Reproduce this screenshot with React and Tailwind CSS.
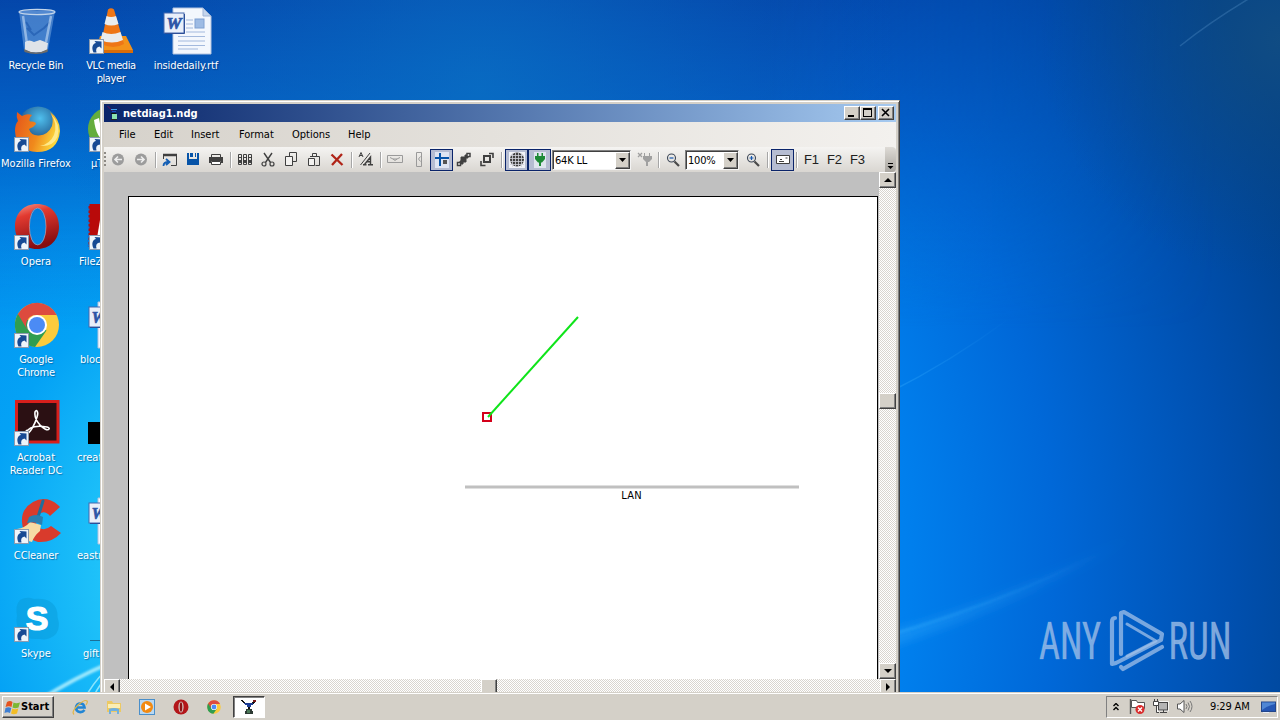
import React from 'react';

const uiFont = "font-['DejaVu_Sans_Condensed','DejaVu_Sans',sans-serif] [font-stretch:condensed]";
const raised = 'bg-[#d4d0c8] border border-t-white border-l-white border-r-[#404040] border-b-[#404040] shadow-[inset_-1px_-1px_0_#808080]';
const dither = 'bg-[#ebe8e4] bg-[conic-gradient(#d9d5cf_25%,#fff_0_50%,#d9d5cf_0_75%,#fff_0)] bg-[length:2px_2px]';

/* ---------- Wallpaper ---------- */

const Wallpaper = () => (
  <svg className="absolute inset-0" width="1280" height="720" viewBox="0 0 1280 720">
    <defs>
      <radialGradient id="sky" gradientUnits="userSpaceOnUse" cx="300" cy="570" r="1080">
        <stop offset="0" stopColor="#3fdcff" />
        <stop offset="0.17" stopColor="#22c6fa" />
        <stop offset="0.3" stopColor="#04a2f5" />
        <stop offset="0.56" stopColor="#0080ee" />
        <stop offset="0.7" stopColor="#0068d8" />
        <stop offset="0.86" stopColor="#0050b0" />
        <stop offset="1" stopColor="#003f88" />
      </radialGradient>
      <linearGradient id="topShade" x1="0" y1="0" x2="0" y2="1">
        <stop offset="0" stopColor="#0442a4" stopOpacity="0.92" />
        <stop offset="0.35" stopColor="#0450b4" stopOpacity="0.75" />
        <stop offset="1" stopColor="#0070d0" stopOpacity="0" />
      </linearGradient>
      <linearGradient id="shadeFade" x1="0" y1="0" x2="1" y2="0">
        <stop offset="0" stopColor="#fff" />
        <stop offset="0.6" stopColor="#fff" />
        <stop offset="0.95" stopColor="#000" />
      </linearGradient>
      <mask id="shadeMask"><rect width="1280" height="330" fill="url(#shadeFade)" /></mask>
      <radialGradient id="topGlow" gradientUnits="userSpaceOnUse" cx="480" cy="90" r="420">
        <stop offset="0" stopColor="#0a70c4" stopOpacity="0.75" />
        <stop offset="1" stopColor="#0a60c0" stopOpacity="0" />
      </radialGradient>
      <radialGradient id="corner" gradientUnits="userSpaceOnUse" cx="1280" cy="40" r="240">
        <stop offset="0" stopColor="#144f82" stopOpacity="0.8" />
        <stop offset="1" stopColor="#0a4888" stopOpacity="0" />
      </radialGradient>
      <linearGradient id="fade" x1="0" y1="0" x2="1" y2="0">
        <stop offset="0" stopColor="#3fb4ff" stopOpacity="0.32" />
        <stop offset="1" stopColor="#3fb4ff" stopOpacity="0" />
      </linearGradient>
      <filter id="soft"><feGaussianBlur stdDeviation="1.3" /></filter>
      <filter id="softer"><feGaussianBlur stdDeviation="4" /></filter>
    </defs>
    <rect width="1280" height="720" fill="url(#sky)" />
    <rect width="1280" height="330" fill="url(#topShade)" mask="url(#shadeMask)" />
    <rect width="1280" height="510" fill="url(#topGlow)" />
    <rect width="1280" height="320" fill="url(#corner)" />
    <path d="M880 634Q1000 602 1130 535L1130 541Q1010 610 880 650Z" fill="url(#fade)" filter="url(#softer)" />
    <path d="M880 638Q1000 604 1100 553" stroke="url(#fade)" strokeWidth="3" fill="none" filter="url(#soft)" />
    <path d="M890 392Q950 362 1010 318" stroke="url(#fade)" strokeWidth="1.500" fill="none" />
    <path d="M1180 46Q1210 22 1250 -2" stroke="#5f9ad0" strokeOpacity="0.3" strokeWidth="1.500" fill="none" />
    <path d="M40 700Q74 678 110 663" stroke="#c8f8ff" strokeWidth="4" strokeOpacity="0.75" fill="none" filter="url(#soft)" />
    <path d="M84 700Q92 684 106 670M92 700Q96 690 104 680" stroke="#a8f0ff" strokeWidth="1.600" strokeOpacity="0.8" fill="none" />
  </svg>
);

const Watermark = () => (
  <svg className="absolute left-[1030px] top-[600px] overflow-visible" width="220" height="80" viewBox="1030 600 220 80">
    <g fill="#a0c0e8" fillOpacity="0.78" stroke="#a0c0e8" strokeOpacity="0.5" strokeWidth="0.700" fontFamily="Roboto, sans-serif" fontSize="51.500">
      <text x="1039" y="659" textLength="62" lengthAdjust="spacingAndGlyphs">ANY</text>
      <text x="1168.500" y="659" textLength="63" lengthAdjust="spacingAndGlyphs">RUN</text>
    </g>
    <g fill="none" stroke="#a0c0e8" strokeOpacity="0.75" strokeWidth="4.200" strokeLinejoin="round" strokeLinecap="round">
      <path d="M1115 618Q1112 618 1112 622V664L1116 663L1161 640L1162 634L1124 612L1121 613V654" />
      <path d="M1127 624L1156 641L1127 656" strokeWidth="3" />
      <path d="M1121 667L1123 669L1162 647" />
    </g>
  </svg>
);

/* ---------- Desktop icons ---------- */

const Shortcut = ({ y = 31 }) => (
  <g>
    <rect x="2.500" y={y + 0.5} width="14" height="14" fill="#eef4fa" stroke="#8b9bb0" />
    <path transform={`translate(2 ${y})`} d="M4.500 13.500C2 8 4 4.500 7 4L5.500 2L12.500 2.500L12.500 9.500L10.500 7.500C7.500 8 6.500 10 7.500 13.500Z" fill="#174a94" />
  </g>
);

const IconBox = ({ children }) => (
  <svg className="overflow-visible shrink-0" width="48" height="48" viewBox="0 0 48 48">{children}</svg>
);

const RecycleBin = () => (
  <IconBox>
    <path d="M7 3L12 42Q24 48 36 42L43 3Z" fill="#7fb0e6" fillOpacity="0.5" />
    <path d="M13 34Q17 31 22 34L28 32L36 35L35 42Q24 47 13 42Z" fill="#dfe3e8" />
    <path d="M12 41Q24 48 36 41L35.500 44Q24 48 12.500 44Z" fill="#6d6b68" />
    <path d="M15 20L22 27L32 20L38 14M14 14L19 22" stroke="#1c56ac" strokeWidth="2" strokeOpacity="0.6" fill="none" />
    <path d="M11 8L15 36M39 8L34 34" stroke="#d4e6fa" strokeOpacity="0.55" strokeWidth="2.500" />
    <ellipse cx="25" cy="4" rx="18" ry="2.600" fill="#5f93d6" fillOpacity="0.6" stroke="#c3d5ea" strokeWidth="1.200" />
  </IconBox>
);

const Vlc = () => (
  <IconBox>
    <path d="M13 28H39L46 42Q46 45 43 45H10Q8 45 9 42Z" fill="#f3921a" />
    <path d="M9 42H46V45H9Z" fill="#d86c08" />
    <path d="M21 1.500Q24 -1 27 1.500L37 36Q27 42 14 36Z" fill="#ee7616" />
    <path d="M19.500 8Q24 10 29 8L31.500 16Q24 19 17.500 16Z" fill="#e9ecee" />
    <path d="M15.500 24Q24 28 33.500 24L36 32Q25 37 13.500 32Z" fill="#e9ecee" />
    <Shortcut />
  </IconBox>
);

const WordDoc = () => (
  <IconBox>
    <path d="M11 0H41L49 8V46H11Z" fill="#f3f7fd" stroke="#b2c3df" />
    <path d="M41 0V8H49Z" fill="#c5d5ec" stroke="#9fb4d6" />
    <rect x="33" y="11" width="9" height="9" fill="#9dbbe4" stroke="#7fa0d2" />
    <path d="M24 12H31M24 16H31M24 20H31M24 24H43M16 28.500H43M16 33H43M16 37.500H43M16 41H36" stroke="#a3b9dd" strokeWidth="1.200" />
    <rect x="2" y="5" width="20" height="20" fill="#e9effa" stroke="#4468ae" />
    <path d="M3 25.500H22.500V6" stroke="#2e4f97" fill="none" />
    <text x="12" y="21" textAnchor="middle" fontFamily="Liberation Serif, serif" fontWeight="700" fontStyle="italic" fontSize="17" fill="#2c55a6" stroke="#2c55a6" strokeWidth="0.700">W</text>
  </IconBox>
);

const Firefox = () => (
  <IconBox>
    <defs>
      <radialGradient id="ffGlobe" cx="0.55" cy="0.3" r="0.7"><stop stopColor="#4fc0ee" /><stop offset="1" stopColor="#12366e" /></radialGradient>
      <linearGradient id="ffTail" x1="0" y1="0" x2="1" y2="0.3"><stop stopColor="#e4521b" /><stop offset="0.6" stopColor="#f08a1c" /><stop offset="1" stopColor="#fbd63c" /></linearGradient>
    </defs>
    <circle cx="26" cy="20.500" r="20" fill="url(#ffGlobe)" />
    <path d="M5 6L10 10Q15 7 20 9Q16 13 18 15.500Q24 15 24 18Q21 22 17 23Q19 30 27 29.500Q36 29 40 20Q42 12 38 6Q48 13 48 25Q46 46 25 46Q4 45 3 25Q3 18 6 15Q4 11 5 6Z" fill="url(#ffTail)" />
    <path d="M39 8Q46 18 42 29Q38 38 28 40Q41 41 45.500 31Q49 18 39 8Z" fill="#ffe98a" />
    <Shortcut />
  </IconBox>
);

const Opera = () => (
  <IconBox>
    <defs>
      <linearGradient id="opRed" x1="0" y1="0" x2="0.3" y2="1"><stop stopColor="#f59a8c" /><stop offset="0.3" stopColor="#e23a30" /><stop offset="1" stopColor="#870d10" /></linearGradient>
    </defs>
    <path fillRule="evenodd" d="M25 0C38 0 47 9 47 22.500S38 45 25 45S3 36 3 22.500S12 0 25 0ZM25.500 4C20 4 17.500 12 17.500 22.500S20 41 25.500 41S34 33 34 22.500S31 4 25.500 4Z" fill="url(#opRed)" />
    <ellipse cx="25.700" cy="22.500" rx="8.300" ry="18.500" fill="none" stroke="#f2a49a" strokeWidth="0.800" strokeOpacity="0.700" />
    <Shortcut />
  </IconBox>
);

const ChromeArt = () => (
  <g>
    <circle cx="25" cy="23" r="22" fill="#fbcb3c" />
    <path d="M25 23L5.900 12A22 22 0 0 0 23 45L34.500 28.500Z" fill="#2f9d50" />
    <path d="M5.900 12A22 22 0 0 1 44.700 13H25A10 10 0 0 0 15.500 28Z" fill="#dd4b3e" />
    <circle cx="25" cy="23" r="10" fill="#fff" />
    <circle cx="25" cy="23" r="8" fill="#4b8bf5" />
  </g>
);

const Chrome = () => (
  <IconBox>
    <ChromeArt />
    <Shortcut />
  </IconBox>
);

const Acrobat = () => (
  <IconBox>
    <rect x="4.500" y="1.500" width="41.500" height="40.500" fill="#2b1013" stroke="#d81f1c" strokeWidth="3" />
    <path d="M14 33C17 26 26 25.500 35 27C39 28 37 31 33 29C27 26 22 18 23 12C24 9 27 11 25 17C23 24 18 34 14 34C12 34 13 32 15 30" fill="none" stroke="#fff" strokeWidth="1.600" />
    <Shortcut />
  </IconBox>
);

const CCleaner = () => (
  <IconBox>
    <path d="M48 9L46 7Q34 -3 21 4Q9 11 10 24Q11 40 26 44Q40 45 49 35L39 28Q32 34 26.500 29Q21 23 26 17Q32 11 38 18Z" fill="#d93b2c" />
    <path d="M18 24L29 27L28 33Q22 38 20 44L6 40Q1 34 5 31Q13 30 18 24Z" fill="#f6dba4" />
    <path d="M31 3L26 19" stroke="#1f6e9c" strokeWidth="3" strokeLinecap="round" />
    <path d="M17 19Q24 15 31 19L30 27Q23 23 15 25Z" fill="#2a7fb0" />
    <Shortcut />
  </IconBox>
);

const Skype = () => (
  <IconBox>
    <path d="M8 4Q15 0 22 3Q34 2 40 7Q46 12 45.500 21Q49 31 44 38Q37 45 28 43Q13 44 8 36Q3 28 5 20Q3 9 8 4Z" fill="#0899d4" fillOpacity="0.45" />
    <text x="25" y="34" textAnchor="middle" fontFamily="Liberation Sans, sans-serif" fontWeight="700" fontSize="34" fill="#fff" stroke="#fff" strokeWidth="1.200">S</text>
    <Shortcut />
  </IconBox>
);

const Torrent = () => (
  <IconBox>
    <circle cx="23" cy="23" r="22" fill="#64ad3c" />
    <path d="M7 14L12 12Q14 27 19 29V36Q9 32 7 14Z" fill="#fff" />
    <Shortcut />
  </IconBox>
);

const FileZilla = () => (
  <IconBox>
    <rect x="1.500" y="0" width="40" height="43" fill="#b80a0a" />
    <path d="M1.500 0V43" stroke="#0478e0" strokeWidth="2" strokeDasharray="2 2.500" />
    <path d="M14 10L20 8V40H9Z" fill="#fff" />
    <Shortcut />
  </IconBox>
);

const BlackFile = () => (
  <IconBox><rect x="1" y="22" width="40" height="22" fill="#000" /></IconBox>
);

const LineFile = () => (
  <IconBox><path d="M3 44.500H30" stroke="#1b6f98" /></IconBox>
);

const DesktopIcon = ({ icon, label, labelClass = 'text-center' }) => (
  <div className="flex h-[98px] w-[72px] flex-col items-center pt-2">
    {icon}
    <div className={`mt-[3px] w-full whitespace-pre text-[11px] leading-[13px] text-white [text-shadow:1px_1px_1px_rgba(0,20,60,0.4)] ${labelClass}`}>
      {label}
    </div>
  </div>
);

const Desktop = () => (
  <div className="absolute inset-0 flex items-start gap-[3px]">
    <div className="flex flex-col">
      <DesktopIcon icon={<RecycleBin />} label="Recycle Bin" labelClass="text-center tracking-[-0.2px]" />
      <DesktopIcon icon={<Firefox />} label="Mozilla Firefox" labelClass="text-center" />
      <DesktopIcon icon={<Opera />} label="Opera" />
      <DesktopIcon icon={<Chrome />} label={'Google\nChrome'} labelClass="text-center tracking-[-0.2px]" />
      <DesktopIcon icon={<Acrobat />} label={'Acrobat\nReader DC'} labelClass="text-center" />
      <DesktopIcon icon={<CCleaner />} label="CCleaner" labelClass="text-center tracking-[-0.1px]" />
      <DesktopIcon icon={<Skype />} label="Skype" labelClass="text-center" />
    </div>
    <div className="flex flex-col">
      <DesktopIcon icon={<Vlc />} label={'VLC media\nplayer'} labelClass="text-center tracking-[-0.4px]" />
      <DesktopIcon icon={<Torrent />} label="µT" labelClass="pl-4" />
      <DesktopIcon icon={<FileZilla />} label="FileZ" labelClass="pl-1" />
      <DesktopIcon icon={<WordDoc />} label="bloc" labelClass="pl-[5px]" />
      <DesktopIcon icon={<BlackFile />} label="creat" labelClass="pl-[2px]" />
      <DesktopIcon icon={<WordDoc />} label="eastr" labelClass="pl-[2px]" />
      <DesktopIcon icon={<LineFile />} label="gift" labelClass="pl-2" />
    </div>
    <DesktopIcon icon={<WordDoc />} label="insidedaily.rtf" labelClass="text-center tracking-[-0.1px]" />
  </div>
);

/* ---------- Toolbar ---------- */

const Glyph = ({ children, color = '#404040' }) => (
  <svg width="16" height="16" viewBox="0 0 16 16" fill="none" stroke={color} strokeWidth="1">{children}</svg>
);

const ToolButton = ({ children, active }) => (
  <div className={`flex h-[22px] w-[23px] shrink-0 items-center pl-[3px] ${active ? 'border border-[#0a246a] bg-[#b6bdd2] pl-[2px]' : ''}`}>
    {children}
  </div>
);

const Separator = () => (
  <div className="flex h-4 w-[6px] shrink-0 justify-center">
    <div className="w-px bg-[#a6a6a6]" />
    <div className="w-px bg-white" />
  </div>
);

const Combo = ({ value, className }) => (
  <div className={`flex h-5 shrink-0 border border-[#808080] border-r-[#f4f4f4] border-b-[#f4f4f4] bg-white shadow-[inset_1px_1px_0_#404040] ${className}`}>
    <div className="flex-1 pl-[2px] pt-[3px] text-[11px] leading-[14px] tracking-[-0.2px] text-black">{value}</div>
    <div className={`mt-px flex w-[15px] items-center justify-center ${raised}`}>
      <svg width="7" height="4" viewBox="0 0 7 4"><path d="M0 0H7L3.500 4Z" fill="#000" /></svg>
    </div>
  </div>
);

const Magnifier = ({ plus }) => (
  <Glyph>
    <circle cx="6.500" cy="6" r="4" stroke="#3c4656" strokeWidth="1.100" />
    <path d="M9.500 9.500L14 14" strokeWidth="2.200" stroke="#4a4a4a" />
    <path d={plus ? 'M4.500 6H8.500M6.500 4V8' : 'M4.500 6H8.500'} stroke="#1558b0" strokeWidth="1.200" />
  </Glyph>
);

const Toolbar = () => (
  <div className="flex h-[25px] items-center bg-linear-to-b from-[#f5f4f2] to-[#d9d6d1]">
    <div className="mr-[1px] h-4 w-[2px] bg-[repeating-linear-gradient(#8d8a85_0_2px,transparent_2px_4px)]" />
    <ToolButton>
      <Glyph><circle cx="8" cy="7.500" r="6" fill="#9c9c9c" stroke="none" /><path d="M12 7.500H5M8 4.500L5 7.500L8 10.500" stroke="#eee" strokeWidth="1.600" /></Glyph>
    </ToolButton>
    <ToolButton>
      <Glyph><circle cx="8" cy="7.500" r="6" fill="#9c9c9c" stroke="none" /><path d="M4 7.500H11M8 4.500L11 7.500L8 10.500" stroke="#eee" strokeWidth="1.600" /></Glyph>
    </ToolButton>
    <Separator />
    <ToolButton>
      <Glyph><path d="M1.500 7V2.500H14.500V13.500H9" /><path d="M1 3H15" strokeWidth="2.500" /><path d="M1.500 14Q1.500 10 6.500 10M4 7L7.500 10L4 13" stroke="#155fb4" strokeWidth="1.800" /></Glyph>
    </ToolButton>
    <ToolButton>
      <Glyph><path d="M2 1H4V7H12V1H14V13H2Z" fill="#0754a8" stroke="none" /><path d="M5 1H8V5H5ZM10 1H11V5H10Z" fill="#0754a8" stroke="none" /></Glyph>
    </ToolButton>
    <ToolButton>
      <Glyph><path d="M3.500 5V2.500H12.500V5" /><path d="M1 5H15V11H13V9H3V11H1Z" fill="#404040" stroke="none" /><path d="M3.500 9.500H12.500V12.500H3.500Z" fill="#fff" /></Glyph>
    </ToolButton>
    <Separator />
    <ToolButton>
      <Glyph>
        <path d="M1.500 2.500H4.500V12.500H1.500ZM6.500 2.500H9.500V12.500H6.500ZM11.500 2.500H14.500V12.500H11.500Z" />
        <path d="M1 5.500H5M6 5.500H10M11 5.500H15" />
        <path d="M2 9.500H4M7 9.500H9M12 9.500H14" strokeWidth="3" />
      </Glyph>
    </ToolButton>
    <ToolButton>
      <Glyph><path d="M4 1L10.500 10.500M12 1L5.500 10.500" strokeWidth="1.400" /><circle cx="4" cy="12" r="2" strokeWidth="1.200" /><circle cx="12" cy="12" r="2" strokeWidth="1.200" /></Glyph>
    </ToolButton>
    <ToolButton>
      <Glyph><path d="M6.500 4.500V0.500H13.500V9.500H10" /><path d="M2.500 4.500H9.500V13.500H2.500Z" fill="#f3f2f0" /></Glyph>
    </ToolButton>
    <ToolButton>
      <Glyph><path d="M6.500 4.500V1.500H10.500V4.500M4 4.500H13.500V13.500H9.500" /><path d="M2.500 6.500H8.500V13.500H2.500Z" fill="#f3f2f0" /></Glyph>
    </ToolButton>
    <ToolButton>
      <Glyph color="#b02418"><path d="M2.500 2.500L13.500 13M13 2L3 13" strokeWidth="2.300" /></Glyph>
    </ToolButton>
    <Separator />
    <ToolButton>
      <Glyph>
        <path d="M1 5L3 0.500L5 5M1.700 3.500H4.300M12 1L2.500 13" />
        <path d="M6.500 12.500L12.500 5V12.500M5 12.800H8.500M10 12.800H15M9 9.800H13" strokeWidth="1.400" />
      </Glyph>
    </ToolButton>
    <Separator />
    <ToolButton>
      <Glyph color="#9a9a9a"><path d="M0.500 3.500H15.500V10.500H0.500Z" /><path d="M3 5.500L6 7H10L13 5.500M6 7L8 8.500L10 7" /></Glyph>
    </ToolButton>
    <ToolButton>
      <Glyph color="#9a9a9a"><path d="M11.500 0.500H6.500V14.500H11.500Z" /><path d="M10.500 4.500L8.500 7L10.500 9.500" /></Glyph>
    </ToolButton>
    <ToolButton active>
      <Glyph>
        <rect x="1" y="0" width="14" height="16" fill="#dfe5f2" stroke="none" />
        <path d="M1 6H15M6 1V14" stroke="#0754a8" strokeWidth="2" />
        <rect x="9" y="8" width="4" height="4" fill="#555" stroke="none" />
      </Glyph>
    </ToolButton>
    <ToolButton>
      <Glyph>
        <path d="M5 5H10V10H5Z" fill="#404040" />
        <path d="M9 3H12V6H9ZM4 9H7V12H4Z" fill="#404040" />
        <rect x="11" y="1.500" width="3" height="3" fill="#fff" strokeWidth="1.500" />
        <rect x="1.500" y="10.500" width="3" height="3" fill="#fff" strokeWidth="1.500" />
      </Glyph>
    </ToolButton>
    <ToolButton>
      <Glyph><path d="M5 4H11V10H5Z" strokeWidth="2" /><path d="M10 1.500H14V6M2 9V13.500H6.500" strokeWidth="1.600" /></Glyph>
    </ToolButton>
    <Separator />
    <ToolButton active>
      <Glyph>
        <rect x="0" y="0" width="16" height="16" fill="#f2f3f8" stroke="none" />
        <circle cx="8" cy="7.500" r="7" fill="#404040" stroke="none" />
        <path d="M1 3.500H15M1 6.500H15M1 9.500H15M1 12.500H15M3.500 1V15M6.500 1V15M9.500 1V15M12.500 1V15" stroke="#d0d2da" strokeWidth="0.800" />
      </Glyph>
    </ToolButton>
    <ToolButton active>
      <Glyph>
        <rect x="2" y="0" width="12" height="16" fill="#dfe6ee" stroke="none" />
        <path d="M5 1H6.500V4H9.500V1H11V4H13V7L10 10.500H9V14H7V10.500H6L3 7V4H5Z" fill="#1d8a35" stroke="none" />
      </Glyph>
    </ToolButton>
    <Combo value="64K LL" className="ml-[1px] w-[79px]" />
    <div className="w-[3px]" />
    <ToolButton>
      <Glyph color="#a0a0a0"><path d="M1 1L5 5M5 1L1 5" strokeWidth="1.300" /><path d="M7 1H8V4H12V1H13V4H15V7L12 10H11V14H9V10L6 7V4H7Z" fill="#a0a0a0" stroke="none" /></Glyph>
    </ToolButton>
    <div className="-ml-px"><Separator /></div>
    <ToolButton><Magnifier /></ToolButton>
    <Combo value="100%" className="w-[54px]" />
    <div className="w-[3px]" />
    <ToolButton><Magnifier plus /></ToolButton>
    <Separator />
    <ToolButton active>
      <Glyph><path d="M1.500 3.500H14.500V11.500H1.500Z" fill="#fff" /><path d="M4 9.500H9M10.500 6H12.500M5 7.500H7" /></Glyph>
    </ToolButton>
    <Separator />
    {['F1', 'F2', 'F3'].map((key) => (
      <div key={key} className="w-[23px] shrink-0 text-center font-['Liberation_Sans',Arial,sans-serif] text-[13px] leading-[22px] text-[#202020]">{key}</div>
    ))}
    <div className="ml-auto flex h-[25px] w-[11px] items-end justify-center rounded-r-sm bg-linear-to-b from-[#dedbd6] to-[#a9a6a0] pb-[2px]">
      <svg width="7" height="7" viewBox="0 0 7 7"><path d="M1 0.500H6" stroke="#000" /><path d="M0.500 3H6.500L3.500 6Z" fill="#000" /></svg>
    </div>
  </div>
);

/* ---------- Window ---------- */

// Satellite dish used by the app in the title bar and on the taskbar
const DishIcon = ({ dark }) =>
  dark ? (
    <svg width="16" height="16" viewBox="0 0 16 16" shapeRendering="crispEdges">
      <path d="M2 1L6 6" stroke="#3a1c60" strokeWidth="1.500" />
      <path d="M5 4H11V5H5Z" fill="#3fa0f0" />
      <path d="M6 6H10V7H6Z" fill="#1b4cc0" />
      <path d="M5 8H10V9H5Z" fill="#111" />
      <path d="M6 9H11V14H6Z" fill="#8be0b0" />
      <path d="M5 14H11V15H5Z" fill="#222" />
    </svg>
  ) : (
    <svg width="16" height="16" viewBox="0 0 16 16" shapeRendering="crispEdges">
      <path d="M1 1L5 6M14 2L10 6" stroke="#111" strokeWidth="1.600" />
      <path d="M12 1H15V3H12Z" fill="#7a1a1a" />
      <path d="M3 4H12V6H10V8H6V6H4Z" fill="#1c3c94" />
      <path d="M7 8H9V10H7Z" fill="#111" />
      <path d="M5 10H11V12H12V15H4V12H5Z" fill="#2d3a34" />
      <path d="M6 11H9V14H6Z" fill="#4b7a58" />
    </svg>
  );

const CaptionButton = ({ children }) => (
  <div className={`flex h-[14px] w-4 items-center justify-center ${raised}`}>
    <svg width="12" height="10" viewBox="0 0 12 10" fill="none" stroke="#000" shapeRendering="crispEdges">{children}</svg>
  </div>
);

const ScrollButton = ({ d, className }) => (
  <div className={`flex shrink-0 items-center justify-center ${raised} ${className}`}>
    <svg width="8" height="8" viewBox="0 0 8 8"><path d={d} fill="#000" /></svg>
  </div>
);

const menus = [
  { label: 'File', width: 'w-[35px]' },
  { label: 'Edit', width: 'w-[37px]' },
  { label: 'Insert', width: 'w-[48px]' },
  { label: 'Format', width: 'w-[53px]' },
  { label: 'Options', width: 'w-[56px]' },
  { label: 'Help', width: 'w-[40px]' },
];

const Diagram = () => (
  <svg width="748" height="482" viewBox="129 197 748 482">
    <rect x="483" y="413" width="8" height="8" fill="#fff" stroke="#d4001a" strokeWidth="2" />
    <path d="M488 417L578 317" stroke="#0fe41a" strokeWidth="2" />
    <path d="M465 487H799" stroke="#c0c0c0" strokeWidth="3" />
    <text x="631.500" y="499" textAnchor="middle" fontSize="11" fill="#000" textLength="20.500">LAN</text>
  </svg>
);

const NetDiagWindow = () => (
  <div className="absolute left-[100px] top-[100px] flex h-[620px] w-[800px] flex-col border border-[#d4d0c8] border-r-[#404040] bg-[#d4d0c8] p-[3px] shadow-[inset_1px_1px_0_#fff,inset_-1px_-1px_0_#808080]">
    <div className="flex h-[18px] shrink-0 items-center bg-linear-to-r from-[#0a246a] to-[#a6caf0] pl-[2px] pr-[2px]">
      <DishIcon dark />
      <span className="ml-[1px] flex-1 pt-px text-[11px] font-bold leading-[18px] text-white">netdiag1.ndg</span>
      <CaptionButton><path d="M2 8H8" strokeWidth="2" /></CaptionButton>
      <CaptionButton><path d="M1.500 1V8.500H9.500V1" /><path d="M1 1H10" strokeWidth="2" /></CaptionButton>
      <div className="w-[2px]" />
      <CaptionButton><path d="M2 1L9 8M9 1L2 8" strokeWidth="1.600" shapeRendering="auto" /></CaptionButton>
    </div>
    <div className="flex h-[25px] shrink-0 items-center bg-linear-to-r from-[#d6d2cb] to-[#f3f1ee] pl-[15px] pt-px">
      {menus.map((menu) => (
        <div key={menu.label} className={`shrink-0 text-[11px] leading-[24px] text-black ${menu.width}`}>{menu.label}</div>
      ))}
    </div>
    <Toolbar />
    <div className="flex h-[507px] shrink-0">
      <div className="w-[775px] bg-[#c0c0c0] pl-6 pt-6">
        <div className="h-[483px] w-[750px] border-x border-t border-black bg-white">
          <Diagram />
        </div>
      </div>
      <div className={`flex w-[17px] flex-col ${dither}`}>
        <ScrollButton className="h-4 w-[17px]" d="M0 6H8L4 2Z" />
        <div className="h-[205px]" />
        <div className={`h-4 w-[17px] ${raised}`} />
        <div className="flex-1" />
        <ScrollButton className="h-4 w-[17px]" d="M0 2H8L4 6Z" />
      </div>
    </div>
    <div className={`flex h-4 shrink-0 ${dither}`}>
      <ScrollButton className="h-4 w-4" d="M6 0V8L2 4Z" />
      <div className="w-[361px]" />
      <div className={`h-4 w-4 ${raised}`} />
      <div className="flex-1" />
      <ScrollButton className="h-4 w-4" d="M2 0V8L6 4Z" />
    </div>
  </div>
);

/* ---------- Taskbar ---------- */

const WindowsFlag = () => (
  <svg width="17" height="17" viewBox="0 0 17 17">
    <path d="M3 3Q6 1 8.500 3L7.500 8Q5 6.500 1.500 8Z" fill="#e5531f" />
    <path d="M9.500 3.500Q12 5 16 3.500L14.500 8.500Q11 10 8.500 8.500Z" fill="#7cb833" />
    <path d="M1.500 9Q4.500 7.500 7.300 9L6 14Q3.500 12.500 0.500 14Z" fill="#3f7fd2" />
    <path d="M8.300 9.500Q11 11 14.300 9.500L13 14.500Q9.500 16 7 14.500Z" fill="#f3bd25" />
  </svg>
);

const QuickLaunch = () => (
  <div className="ml-[18px] flex items-center gap-[17.500px]">
    <svg width="16" height="16" viewBox="0 0 16 16">
      <path d="M12.500 11Q10.500 13.500 7.500 13Q4 12 4 8.500Q4.500 4.500 8.500 4.500Q12 4.500 12.500 8.500H5" fill="none" stroke="#2185d4" strokeWidth="2.600" />
      <path d="M2 15.500Q-1 13 6 6Q13 0 15 2Q16 3 14 6" fill="none" stroke="#e0b444" strokeWidth="1.200" />
    </svg>
    <svg width="16" height="16" viewBox="0 0 16 16">
      <path d="M1 2H6L7 4H15V13H1Z" fill="#ecc963" />
      <path d="M2 5H14V9H2Z" fill="#fbeeb4" />
      <path d="M3 10Q8 8 13 10V15H11V12H5V15H3Z" fill="#6fb0e0" />
    </svg>
    <svg width="16" height="16" viewBox="0 0 16 16">
      <rect x="0.500" y="0.500" width="15" height="15" fill="#b9d8f2" stroke="#4a8fca" />
      <circle cx="8" cy="8" r="6" fill="#f28a12" />
      <path d="M6 4.500L12 8L6 11.500Z" fill="#fff" />
    </svg>
    <svg width="16" height="16" viewBox="0 0 16 16">
      <circle cx="8" cy="8" r="7.500" fill="#b3161a" />
      <ellipse cx="8" cy="8" rx="2.600" ry="5.500" fill="#d6c8c4" />
      <ellipse cx="8" cy="8" rx="1.300" ry="4.800" fill="#8c1114" />
    </svg>
    <svg width="16" height="16" viewBox="-1 -3 52 52"><ChromeArt /></svg>
  </div>
);

const Tray = () => (
  <div className="ml-auto mr-[2px] flex h-[22px] w-[172px] items-center border border-[#808080] border-b-white border-r-white pl-[5px]">
    <svg width="8" height="9" viewBox="0 0 8 9" fill="none" stroke="#000" strokeWidth="1.400"><path d="M1.500 3L4 0.500L6.500 3M1.500 7L4 4.500L6.500 7" /></svg>
    <svg className="ml-[9px]" width="17" height="16" viewBox="0 0 17 16">
      <path d="M1.500 0V15" stroke="#555" strokeWidth="1.400" />
      <path d="M2.500 1.500H7.500L8.500 3.500H15.500V9.500H9L8 8.500H2.500Z" fill="#fff" stroke="#555" />
      <circle cx="11" cy="10.500" r="4.500" fill="#d92b2b" />
      <path d="M9 8.500L13 12.500M13 8.500L9 12.500" stroke="#fff" strokeWidth="1.400" />
    </svg>
    <svg className="ml-[7px]" width="16" height="16" viewBox="0 0 16 16">
      <rect x="5.500" y="3.500" width="9" height="7.500" fill="#b4b4b4" stroke="#fff" strokeWidth="2.500" />
      <rect x="5.500" y="3.500" width="9" height="7.500" fill="#b4b4b4" stroke="#444" />
      <path d="M7 13.500H14M10.500 11V13" stroke="#444" />
      <path d="M0.500 2.500H5.500V6.500H0.500ZM1.500 0V2.500M4.500 0V2.500M3.500 7V13.500H6" fill="#fff" stroke="#444" />
    </svg>
    <svg className="ml-[7px]" width="17" height="16" viewBox="0 0 17 16">
      <path d="M1.500 5H4L8 1.500V13.500L4 10H1.500Z" fill="#fff" stroke="#555" />
      <path d="M10 5Q12 7.500 10 10M12 3.500Q15 7.500 12 11.500M14 2Q18 7.500 14 13" fill="none" stroke="#777" />
    </svg>
    <span className="ml-[17px] w-[42px] whitespace-nowrap text-[11px] leading-5 tracking-[-0.15px] text-black">9:29 AM</span>
    <svg className="ml-[9px]" width="15" height="13" viewBox="0 0 15 13">
      <rect x="0.500" y="1" width="14" height="9.500" fill="#2456b4" stroke="#23468a" />
      <path d="M1 1.500H14V3Q6 5 1 9Z" fill="#4f86d4" />
      <path d="M2 11.500H8" stroke="#e8eef8" />
    </svg>
  </div>
);

const Taskbar = () => (
  <div className="relative mt-auto flex h-7 w-full items-center border-t border-[#d4d0c8] bg-[#d4d0c8] pt-px shadow-[inset_0_1px_0_#fff]">
    <div className={`ml-[2px] flex h-[22px] w-[52px] items-center pl-px ${raised}`}>
      <WindowsFlag />
      <span className="pt-px text-[11px] font-bold text-black">Start</span>
    </div>
    <QuickLaunch />
    <div className="ml-[11px] flex h-[22px] w-8 items-center justify-center border border-[#404040] border-b-white border-r-white bg-white shadow-[inset_1px_1px_0_#808080]">
      <DishIcon />
    </div>
    <Tray />
  </div>
);

const App = () => (
  <div className={`relative flex h-[720px] w-[1280px] flex-col overflow-hidden ${uiFont}`}>
    <Wallpaper />
    <Watermark />
    <Desktop />
    <NetDiagWindow />
    <Taskbar />
  </div>
);

export default App;
